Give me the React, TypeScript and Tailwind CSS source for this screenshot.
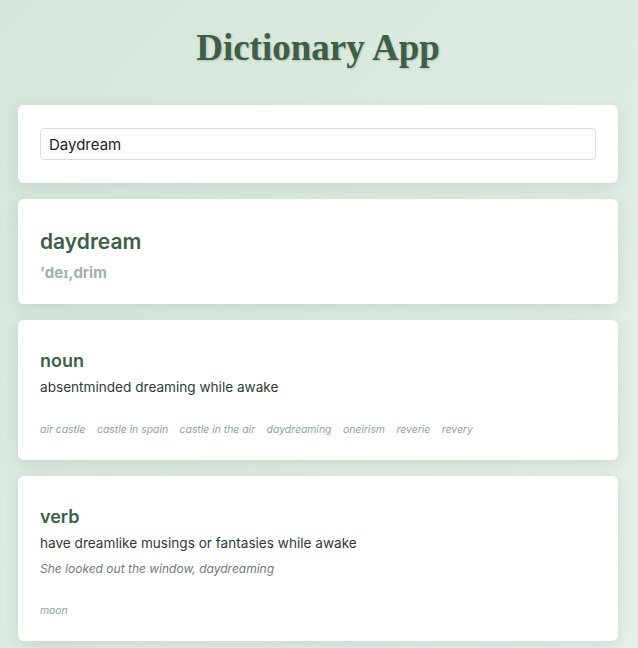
import React from 'react';

type Meaning = {
  part: string;
  definition: string;
  example?: string;
  synonyms: string[];
};

const meanings: Meaning[] = [
  {
    part: 'noun',
    definition: 'absentminded dreaming while awake',
    synonyms: ['air castle', 'castle in spain', 'castle in the air', 'daydreaming', 'oneirism', 'reverie', 'revery'],
  },
  {
    part: 'verb',
    definition: 'have dreamlike musings or fantasies while awake',
    example: 'She looked out the window, daydreaming',
    synonyms: ['moon'],
  },
];

function Card({ children, className = '' }: { children: React.ReactNode; className?: string }) {
  return (
    <div className={`bg-white rounded-md px-[22px] shadow-[0_4px_14px_rgba(70,100,80,0.14)] ${className}`}>
      {children}
    </div>
  );
}

export default function App() {
  return (
    <div
      className="min-h-screen bg-gradient-to-br from-[#d4e6d9] to-[#e7f0e9] pl-[18px] pt-[22px] pb-8"
      style={{ fontFamily: 'Inter, "Noto Sans", sans-serif' }}
    >
      <div className="w-[600px]">
        <h1
          className="text-center text-[37px] leading-[52px] font-bold text-[#3d5e48] mb-[31px] [text-shadow:1px_1px_2px_rgba(60,80,60,0.25)]"
          style={{ fontFamily: '"Liberation Serif", "DejaVu Serif", serif' }}
        >
          Dictionary App
        </h1>

        <div className="flex flex-col gap-4">
          <Card className="py-[23px]">
            <input
              defaultValue="Daydream"
              className="w-full h-[32px] rounded border border-[#dcdcdc] px-2 text-[15px] text-[#222] outline-none"
            />
          </Card>

          <Card className="pt-[26px] pb-[19px]">
            <h2 className="text-[21px] leading-[33px] font-semibold text-[#3d5e48]">daydream</h2>
            <p className="text-[15px] leading-[24px] font-bold text-[#a3b0a8] mt-[3px]">'deɪ,drim</p>
          </Card>

          {meanings.map((m) => (
            <Card key={m.part} className="pt-[27px] pb-[22px]">
              <h3 className="text-[18px] leading-[28px] font-semibold text-[#3d5e48]">{m.part}</h3>
              <p className="text-[13.6px] leading-[24px] text-[#2f3a33]">{m.definition}</p>
              {m.example && (
                <p className="text-[12px] leading-[20px] italic text-[#6f7782] mt-[4px]">{m.example}</p>
              )}
              <div className={`flex flex-wrap gap-x-[11.5px] ${m.example ? 'mt-[24px]' : 'mt-[23px]'}`}>
                {m.synonyms.map((s) => (
                  <span key={s} className="text-[10.4px] leading-[16px] italic text-[#8ea394]">
                    {s}
                  </span>
                ))}
              </div>
            </Card>
          ))}
        </div>
      </div>
    </div>
  );
}
